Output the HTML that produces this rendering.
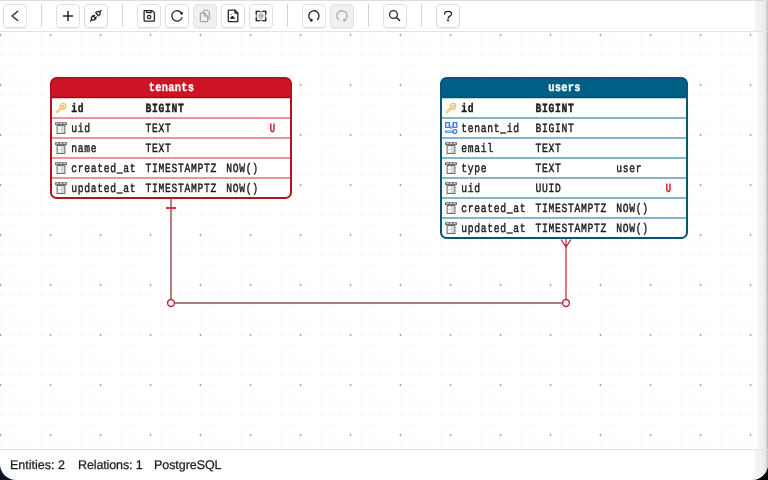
<!DOCTYPE html>
<html><head><meta charset="utf-8">
<style>
*{margin:0;padding:0;box-sizing:border-box}
html,body{width:768px;height:480px;overflow:hidden;background:linear-gradient(to right,#0c1622 0%,#0c1622 5%,#000 95%)}
#win{position:absolute;left:0;top:0;width:768px;height:480px;background:#fff;border-radius:1px 1px 16px 16px;overflow:hidden}
.topline{position:absolute;left:0;top:0;width:768px;height:1px;background:#dcdcdc}
.tbborder{position:absolute;left:0;top:31px;width:768px;height:1px;background:#e3e3e3}
.stborder{position:absolute;left:0;top:449px;width:768px;height:1px;background:#e3e3e3}
#cv{position:absolute;left:0;top:0;text-rendering:geometricPrecision;will-change:transform}
.btn{position:absolute;top:4px;width:24px;height:23.5px;border:1px solid #d8e0e8;border-radius:4px;background:#fff;box-shadow:0 1.5px 0 -0.5px #ececec}
.btn.dis{background:#f0f0f0;border-color:#e4e4e4}
.btn svg{position:absolute;left:0;top:0}
.sep{position:absolute;top:4px;width:1px;height:23px;background:#d4d4d4}
.st{position:absolute;top:457px;font:12.5px "Liberation Sans",sans-serif;color:#1c1c1c;-webkit-text-stroke:0.25px #1c1c1c;line-height:16px;white-space:pre;text-rendering:geometricPrecision;will-change:transform}
.tx{font-family:"Liberation Mono",monospace;font-size:12.4px;fill:#1c1c1c;stroke:#1c1c1c;stroke-width:0.45px}
.b{font-weight:bold}
.ht{font-family:"Liberation Mono",monospace;font-size:12.4px;font-weight:bold;fill:#fff;stroke:#fff;stroke-width:0.35px}
.tu{font-family:"Liberation Mono",monospace;font-size:12.4px;font-weight:bold;fill:#d0202c;stroke:#d0202c;stroke-width:0.15px}
.strip1{position:absolute;left:755px;top:1px;width:13px;height:30px;background:linear-gradient(to right,#f3f3f3 0%,#f1f1f1 50%,#e8e8e8 80%,#bdbdbd 100%)}
.strip2{position:absolute;left:755px;top:450px;width:13px;height:30px;background:linear-gradient(to right,#f3f3f3 0%,#f1f1f1 50%,#e8e8e8 80%,#bdbdbd 100%)}
.strip3{position:absolute;left:758px;top:32px;width:10px;height:417px;background:linear-gradient(to right,rgba(230,230,230,.35) 0%,rgba(225,225,225,.5) 60%,rgba(200,200,200,.7) 85%,rgba(160,160,160,.85) 100%)}
</style></head><body>
<div id="win">
<svg id="cv" width="768" height="480" viewBox="0 0 768 480">
<defs>
<pattern id="sd" x="0" y="5" width="10" height="10" patternUnits="userSpaceOnUse"><rect x="0" y="0" width="1" height="1" fill="#e5e5e5"/></pattern>
<pattern id="bd" x="-2" y="32" width="50" height="50" patternUnits="userSpaceOnUse"><ellipse cx="2.5" cy="3" rx="0.9" ry="1.2" fill="#ababab"/></pattern>
</defs>
<rect x="0" y="32" width="768" height="417" fill="url(#sd)"/>
<rect x="0" y="32" width="768" height="417" fill="url(#bd)"/>

<path d="M171 199 V303" stroke="#b27e86" stroke-width="2"/>
<path d="M171 303 H566" stroke="#b57a7e" stroke-width="2"/>
<path d="M566 239 V303" stroke="#e27b82" stroke-width="2"/>
<path d="M166 208 H176" stroke="#e0303f" stroke-width="2"/>
<path d="M561 239.5 L566 246.8 L571 239.5" fill="none" stroke="#9c2a36" stroke-width="1.25"/><circle cx="566" cy="245.5" r="1" fill="#d0202c"/>
<circle cx="171" cy="303" r="3.4" fill="#fff" stroke="#b3303c" stroke-width="1.5"/>
<circle cx="566" cy="303" r="3.4" fill="#fff" stroke="#b3303c" stroke-width="1.5"/>

<rect x="51" y="78" width="240" height="120" rx="5.5" fill="#fff" stroke="none"/><path d="M51 97.5 V83.5 A5.5 5.5 0 0 1 56.5 78 H285.5 A5.5 5.5 0 0 1 291 83.5 V97.5 Z" fill="#cc1424"/><path d="M51 97.6 H291" stroke="#a00c1a" stroke-width="1.5"/><path d="M51 118 H291" stroke="#e5707c" stroke-width="1.7"/><path d="M51 138 H291" stroke="#e5707c" stroke-width="1.7"/><path d="M51 158 H291" stroke="#e5707c" stroke-width="1.7"/><path d="M51 178 H291" stroke="#e5707c" stroke-width="1.7"/><rect x="51" y="78" width="240" height="120" rx="5.5" fill="none" stroke="#b3121f" stroke-width="2"/><text transform="translate(148.75,91.4) scale(0.84,1)" class="ht" style="letter-spacing:0.298px">tenants</text><g transform="translate(55,102)"><path d="M6.2 6 L2 10.2" stroke="#f0bf6a" stroke-width="2.6" stroke-linecap="round"/><path d="M6.2 6 L2 10.2" stroke="#fdebd0" stroke-width="0.9" stroke-linecap="round"/><circle cx="8" cy="4.2" r="2.8" fill="#fff3dc" stroke="#f0bf6a" stroke-width="1.3"/><circle cx="8" cy="4.2" r="0.8" fill="#d8606a"/></g><text transform="translate(71.30,111.5) scale(0.78,1)" class="tx b" style="letter-spacing:0.893px">id</text><text transform="translate(145.60,111.5) scale(0.78,1)" class="tx b" style="letter-spacing:0.893px">BIGINT</text><g transform="translate(55,122)"><rect x="0" y="0.2" width="12" height="2.9" rx="0.4" fill="#6a6a6a"/><path d="M1.4 1.65 H3.6 M4.9 1.65 H7.1 M8.4 1.65 H10.6" stroke="#f4f4f4" stroke-width="0.9"/><rect x="2.1" y="3.5" width="7.8" height="8" fill="#d3d9de" stroke="#6a6a6a" stroke-width="1"/><rect x="2.9" y="4.5" width="2.8" height="2.4" fill="#fff"/><rect x="2.9" y="8" width="2.8" height="2.4" fill="#fff"/></g><text transform="translate(71.30,131.5) scale(0.78,1)" class="tx" style="letter-spacing:0.893px">uid</text><text transform="translate(145.60,131.5) scale(0.78,1)" class="tx" style="letter-spacing:0.893px">TEXT</text><text transform="translate(269.40,131.5) scale(0.78,1)" class="tu" style="letter-spacing:0.893px">U</text><g transform="translate(55,142)"><rect x="0" y="0.2" width="12" height="2.9" rx="0.4" fill="#6a6a6a"/><path d="M1.4 1.65 H3.6 M4.9 1.65 H7.1 M8.4 1.65 H10.6" stroke="#f4f4f4" stroke-width="0.9"/><rect x="2.1" y="3.5" width="7.8" height="8" fill="#d3d9de" stroke="#6a6a6a" stroke-width="1"/><rect x="2.9" y="4.5" width="2.8" height="2.4" fill="#fff"/><rect x="2.9" y="8" width="2.8" height="2.4" fill="#fff"/></g><text transform="translate(71.30,151.5) scale(0.78,1)" class="tx" style="letter-spacing:0.893px">name</text><text transform="translate(145.60,151.5) scale(0.78,1)" class="tx" style="letter-spacing:0.893px">TEXT</text><g transform="translate(55,162)"><rect x="0" y="0.2" width="12" height="2.9" rx="0.4" fill="#6a6a6a"/><path d="M1.4 1.65 H3.6 M4.9 1.65 H7.1 M8.4 1.65 H10.6" stroke="#f4f4f4" stroke-width="0.9"/><rect x="2.1" y="3.5" width="7.8" height="8" fill="#d3d9de" stroke="#6a6a6a" stroke-width="1"/><rect x="2.9" y="4.5" width="2.8" height="2.4" fill="#fff"/><rect x="2.9" y="8" width="2.8" height="2.4" fill="#fff"/></g><text transform="translate(71.30,171.5) scale(0.78,1)" class="tx" style="letter-spacing:0.893px">created_at</text><text transform="translate(145.60,171.5) scale(0.78,1)" class="tx" style="letter-spacing:0.893px">TIMESTAMPTZ</text><text transform="translate(226.30,171.5) scale(0.78,1)" class="tx" style="letter-spacing:0.893px">NOW()</text><g transform="translate(55,182)"><rect x="0" y="0.2" width="12" height="2.9" rx="0.4" fill="#6a6a6a"/><path d="M1.4 1.65 H3.6 M4.9 1.65 H7.1 M8.4 1.65 H10.6" stroke="#f4f4f4" stroke-width="0.9"/><rect x="2.1" y="3.5" width="7.8" height="8" fill="#d3d9de" stroke="#6a6a6a" stroke-width="1"/><rect x="2.9" y="4.5" width="2.8" height="2.4" fill="#fff"/><rect x="2.9" y="8" width="2.8" height="2.4" fill="#fff"/></g><text transform="translate(71.30,191.5) scale(0.78,1)" class="tx" style="letter-spacing:0.893px">updated_at</text><text transform="translate(145.60,191.5) scale(0.78,1)" class="tx" style="letter-spacing:0.893px">TIMESTAMPTZ</text><text transform="translate(226.30,191.5) scale(0.78,1)" class="tx" style="letter-spacing:0.893px">NOW()</text>
<rect x="441" y="78" width="246" height="160" rx="5.5" fill="#fff" stroke="none"/><path d="M441 97.5 V83.5 A5.5 5.5 0 0 1 446.5 78 H681.5 A5.5 5.5 0 0 1 687 83.5 V97.5 Z" fill="#005f85"/><path d="M441 97.6 H687" stroke="#0b4f6e" stroke-width="1.5"/><path d="M441 118 H687" stroke="#5b9bb8" stroke-width="1.7"/><path d="M441 138 H687" stroke="#5b9bb8" stroke-width="1.7"/><path d="M441 158 H687" stroke="#5b9bb8" stroke-width="1.7"/><path d="M441 178 H687" stroke="#5b9bb8" stroke-width="1.7"/><path d="M441 198 H687" stroke="#5b9bb8" stroke-width="1.7"/><path d="M441 218 H687" stroke="#5b9bb8" stroke-width="1.7"/><rect x="441" y="78" width="246" height="160" rx="5.5" fill="none" stroke="#0b5475" stroke-width="2"/><text transform="translate(548.25,91.4) scale(0.84,1)" class="ht" style="letter-spacing:0.298px">users</text><g transform="translate(445,102)"><path d="M6.2 6 L2 10.2" stroke="#f0bf6a" stroke-width="2.6" stroke-linecap="round"/><path d="M6.2 6 L2 10.2" stroke="#fdebd0" stroke-width="0.9" stroke-linecap="round"/><circle cx="8" cy="4.2" r="2.8" fill="#fff3dc" stroke="#f0bf6a" stroke-width="1.3"/><circle cx="8" cy="4.2" r="0.8" fill="#d8606a"/></g><text transform="translate(461.30,111.5) scale(0.78,1)" class="tx b" style="letter-spacing:0.893px">id</text><text transform="translate(535.60,111.5) scale(0.78,1)" class="tx b" style="letter-spacing:0.893px">BIGINT</text><g transform="translate(445,122)"><path d="M0.7 0.7 H4.3 V5.3 H0.7 Z M8.2 0.7 H11.8 V5.3 H8.2 Z" fill="#eef4fc" stroke="#3f7fd9" stroke-width="1.3"/><path d="M4.3 2.5 L6.2 6.8 L8.2 2.5" fill="none" stroke="#3f7fd9" stroke-width="1"/><path d="M0.8 9.6 H8" stroke="#3f7fd9" stroke-width="2.2" stroke-linecap="round"/><path d="M1.2 9.6 H7.6" stroke="#cfe0f6" stroke-width="0.7"/><circle cx="9.9" cy="9.6" r="1.9" fill="#fff" stroke="#3f7fd9" stroke-width="1.3"/></g><text transform="translate(461.30,131.5) scale(0.78,1)" class="tx" style="letter-spacing:0.893px">tenant_id</text><text transform="translate(535.60,131.5) scale(0.78,1)" class="tx" style="letter-spacing:0.893px">BIGINT</text><g transform="translate(445,142)"><rect x="0" y="0.2" width="12" height="2.9" rx="0.4" fill="#6a6a6a"/><path d="M1.4 1.65 H3.6 M4.9 1.65 H7.1 M8.4 1.65 H10.6" stroke="#f4f4f4" stroke-width="0.9"/><rect x="2.1" y="3.5" width="7.8" height="8" fill="#d3d9de" stroke="#6a6a6a" stroke-width="1"/><rect x="2.9" y="4.5" width="2.8" height="2.4" fill="#fff"/><rect x="2.9" y="8" width="2.8" height="2.4" fill="#fff"/></g><text transform="translate(461.30,151.5) scale(0.78,1)" class="tx" style="letter-spacing:0.893px">email</text><text transform="translate(535.60,151.5) scale(0.78,1)" class="tx" style="letter-spacing:0.893px">TEXT</text><g transform="translate(445,162)"><rect x="0" y="0.2" width="12" height="2.9" rx="0.4" fill="#6a6a6a"/><path d="M1.4 1.65 H3.6 M4.9 1.65 H7.1 M8.4 1.65 H10.6" stroke="#f4f4f4" stroke-width="0.9"/><rect x="2.1" y="3.5" width="7.8" height="8" fill="#d3d9de" stroke="#6a6a6a" stroke-width="1"/><rect x="2.9" y="4.5" width="2.8" height="2.4" fill="#fff"/><rect x="2.9" y="8" width="2.8" height="2.4" fill="#fff"/></g><text transform="translate(461.30,171.5) scale(0.78,1)" class="tx" style="letter-spacing:0.893px">type</text><text transform="translate(535.60,171.5) scale(0.78,1)" class="tx" style="letter-spacing:0.893px">TEXT</text><text transform="translate(616.30,171.5) scale(0.78,1)" class="tx" style="letter-spacing:0.893px">user</text><g transform="translate(445,182)"><rect x="0" y="0.2" width="12" height="2.9" rx="0.4" fill="#6a6a6a"/><path d="M1.4 1.65 H3.6 M4.9 1.65 H7.1 M8.4 1.65 H10.6" stroke="#f4f4f4" stroke-width="0.9"/><rect x="2.1" y="3.5" width="7.8" height="8" fill="#d3d9de" stroke="#6a6a6a" stroke-width="1"/><rect x="2.9" y="4.5" width="2.8" height="2.4" fill="#fff"/><rect x="2.9" y="8" width="2.8" height="2.4" fill="#fff"/></g><text transform="translate(461.30,191.5) scale(0.78,1)" class="tx" style="letter-spacing:0.893px">uid</text><text transform="translate(535.60,191.5) scale(0.78,1)" class="tx" style="letter-spacing:0.893px">UUID</text><text transform="translate(665.40,191.5) scale(0.78,1)" class="tu" style="letter-spacing:0.893px">U</text><g transform="translate(445,202)"><rect x="0" y="0.2" width="12" height="2.9" rx="0.4" fill="#6a6a6a"/><path d="M1.4 1.65 H3.6 M4.9 1.65 H7.1 M8.4 1.65 H10.6" stroke="#f4f4f4" stroke-width="0.9"/><rect x="2.1" y="3.5" width="7.8" height="8" fill="#d3d9de" stroke="#6a6a6a" stroke-width="1"/><rect x="2.9" y="4.5" width="2.8" height="2.4" fill="#fff"/><rect x="2.9" y="8" width="2.8" height="2.4" fill="#fff"/></g><text transform="translate(461.30,211.5) scale(0.78,1)" class="tx" style="letter-spacing:0.893px">created_at</text><text transform="translate(535.60,211.5) scale(0.78,1)" class="tx" style="letter-spacing:0.893px">TIMESTAMPTZ</text><text transform="translate(616.30,211.5) scale(0.78,1)" class="tx" style="letter-spacing:0.893px">NOW()</text><g transform="translate(445,222)"><rect x="0" y="0.2" width="12" height="2.9" rx="0.4" fill="#6a6a6a"/><path d="M1.4 1.65 H3.6 M4.9 1.65 H7.1 M8.4 1.65 H10.6" stroke="#f4f4f4" stroke-width="0.9"/><rect x="2.1" y="3.5" width="7.8" height="8" fill="#d3d9de" stroke="#6a6a6a" stroke-width="1"/><rect x="2.9" y="4.5" width="2.8" height="2.4" fill="#fff"/><rect x="2.9" y="8" width="2.8" height="2.4" fill="#fff"/></g><text transform="translate(461.30,231.5) scale(0.78,1)" class="tx" style="letter-spacing:0.893px">updated_at</text><text transform="translate(535.60,231.5) scale(0.78,1)" class="tx" style="letter-spacing:0.893px">TIMESTAMPTZ</text><text transform="translate(616.30,231.5) scale(0.78,1)" class="tx" style="letter-spacing:0.893px">NOW()</text>
</svg>
<div class="topline"></div>
<div class="btn" style="left:3px"><svg width="24" height="24" viewBox="0 0 24 24" style="left:-1px;top:-1px"><path d="M14.7 7.3 L9 12 L14.7 16.6" stroke="#262626" stroke-width="1.3" fill="none" stroke-linecap="round" stroke-linejoin="round"/></svg></div>
<div class="btn" style="left:56px"><svg width="24" height="24" viewBox="0 0 24 24" style="left:-1px;top:-1px"><path d="M7 12 H17 M12 7 V17" stroke="#2a2a2a" stroke-width="1.5" fill="none"/></svg></div>
<div class="btn" style="left:84px"><svg width="24" height="24" viewBox="0 0 24 24" style="left:-1px;top:-1px"><g transform="translate(4.75,4.75) scale(0.583)" stroke="#262626" stroke-width="2.3" fill="none" stroke-linecap="round" stroke-linejoin="round"><path d="M7 12l5 5l-1.5 1.5a3.536 3.536 0 1 1 -5 -5l1.5 -1.5z"/><path d="M17 12l-5 -5l1.5 -1.5a3.536 3.536 0 1 1 5 5l-1.5 1.5z"/><path d="M3 21l2.5 -2.5"/><path d="M18.5 5.5l2.5 -2.5"/><path d="M10 11l-2 2"/><path d="M13 14l-2 2"/></g></svg></div>
<div class="btn" style="left:137px"><svg width="24" height="24" viewBox="0 0 24 24" style="left:-1px;top:-1px"><g stroke="#262626" stroke-width="1.3" fill="none" stroke-linecap="round" stroke-linejoin="round"><path d="M7.2 6.6 H15.2 L17.4 8.8 V16.3 A0.9 0.9 0 0 1 16.5 17.2 H8 A0.9 0.9 0 0 1 7.1 16.3 V7.5 Z"/><path d="M9.6 6.8 V8.1 A0.6 0.6 0 0 0 10.2 8.7 H13.6 A0.6 0.6 0 0 0 14.2 8.1 V6.8"/><circle cx="12.1" cy="13" r="1.7"/></g></svg></div>
<div class="btn" style="left:165px"><svg width="24" height="24" viewBox="0 0 24 24" style="left:-1px;top:-1px"><g stroke="#262626" stroke-width="1.3" fill="none" stroke-linecap="round" stroke-linejoin="round"><path d="M16.6 9.3 A5.2 5.2 0 1 0 17 13.6"/><circle cx="16.6" cy="9.3" r="0.7" fill="#262626"/></g></svg></div>
<div class="btn dis" style="left:193px"><svg width="24" height="24" viewBox="0 0 24 24" style="left:-1px;top:-1px"><g stroke="#ababab" stroke-width="1.3" fill="none" stroke-linecap="round" stroke-linejoin="round"><path d="M10.6 8.4 V7 A0.6 0.6 0 0 1 11.2 6.4 H14.5 L16.4 8.3 V14.6 A0.6 0.6 0 0 1 15.8 15.2 H14.8"/><path d="M7.4 9.6 A0.6 0.6 0 0 1 8 9 H11.4 L14.6 12.2 V17 A0.6 0.6 0 0 1 14 17.6 H8 A0.6 0.6 0 0 1 7.4 17 Z"/><path d="M11.4 9 V11.6 A0.6 0.6 0 0 0 12 12.2 H14.6"/></g></svg></div>
<div class="btn" style="left:221px"><svg width="24" height="24" viewBox="0 0 24 24" style="left:-1px;top:-1px"><g stroke="#262626" stroke-width="1.3" fill="none" stroke-linecap="round" stroke-linejoin="round"><path d="M7.9 6.2 H14 L16.8 9 V17 A0.6 0.6 0 0 1 16.2 17.6 H7.9 A0.6 0.6 0 0 1 7.3 17 V6.8 A0.6 0.6 0 0 1 7.9 6.2 Z"/><path d="M14 6.4 V9 H16.6"/><path d="M9.6 14.2 L11.4 12.6 L13.4 14.2 Z" fill="#262626"/><circle cx="10.2" cy="10.6" r="0.5" fill="#262626" stroke="none"/></g></svg></div>
<div class="btn" style="left:249px"><svg width="24" height="24" viewBox="0 0 24 24" style="left:-1px;top:-1px"><path d="M7.3 7.3 H16.7 V16.7 H7.3 Z M12 7.3 V16.7 M7.3 12 H16.7" stroke="#a0a0a0" stroke-width="1.2" fill="none"/><g stroke="#222" stroke-width="1.3" fill="none"><path d="M7.3 10.6 V7.3 H10.6 M13.4 7.3 H16.7 V10.6 M16.7 13.4 V16.7 H13.4 M10.6 16.7 H7.3 V13.4"/><path d="M10.4 10.6 H10.6 V10.4 M13.6 10.4 V10.6 H13.4 M13.4 13.6 H13.6 V13.4 M10.4 13.4 V13.6 H10.6" stroke-width="1.1"/></g></svg></div>
<div class="btn" style="left:302px"><svg width="24" height="24" viewBox="0 0 24 24" style="left:-1px;top:-1px"><g stroke="#262626" stroke-width="1.3" fill="none" stroke-linecap="round" stroke-linejoin="round"><path d="M9.2 16.2 A5.1 5.1 0 1 1 15.5 15.5"/><circle cx="9.3" cy="16.2" r="0.8" fill="#262626"/></g></svg></div>
<div class="btn dis" style="left:330px"><svg width="24" height="24" viewBox="0 0 24 24" style="left:-1px;top:-1px"><g stroke="#ababab" stroke-width="1.3" fill="none" stroke-linecap="round" stroke-linejoin="round"><path d="M14.6 16.2 A5.1 5.1 0 1 0 8.4 15.5"/><circle cx="14.5" cy="16.2" r="0.7" fill="#ababab"/></g></svg></div>
<div class="btn" style="left:383px"><svg width="24" height="24" viewBox="0 0 24 24" style="left:-1px;top:-1px"><g stroke="#262626" stroke-width="1.3" fill="none" stroke-linecap="round" stroke-linejoin="round"><circle cx="10.5" cy="10.5" r="3.9"/><path d="M13.4 13.4 L16.6 16.5" stroke-width="1.5"/></g></svg></div>
<div class="btn" style="left:436px"><svg width="24" height="24" viewBox="0 0 24 24" style="left:-1px;top:-1px"><g stroke="#262626" stroke-width="1.3" fill="none" stroke-linecap="round" stroke-linejoin="round"><path d="M8.6 9.9 C8.6 6.6 15.6 6.6 15.6 9.9 C15.6 11.9 12.2 12.3 12.1 14.3"/><path d="M11.4 16.3 H12.6" stroke-width="1.4"/></g></svg></div>
<div class="sep" style="left:41px"></div>
<div class="sep" style="left:122px"></div>
<div class="sep" style="left:287px"></div>
<div class="sep" style="left:368px"></div>
<div class="sep" style="left:421px"></div>

<div class="tbborder"></div>
<div class="stborder"></div>
<div class="strip1"></div><div class="strip2"></div><div class="strip3"></div>
<div class="st" style="left:9.7px">Entities: 2</div>
<div class="st" style="left:77.8px;letter-spacing:-0.12px">Relations: 1</div>
<div class="st" style="left:153.9px;letter-spacing:-0.06px">PostgreSQL</div>
</div>
</body></html>
